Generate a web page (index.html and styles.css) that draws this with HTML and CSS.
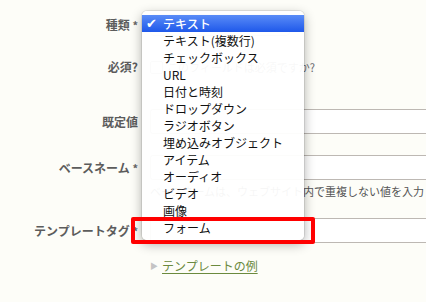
FILE: index.html
```html
<!DOCTYPE html>
<html lang="ja">
<head>
<meta charset="utf-8">
<link rel="stylesheet" href="styles.css">
</head>
<body>
<div class="page">
  <form class="form">
    <div class="row row-type">
      <div class="label">種類 <span class="req">*</span></div>
      <div class="field"><div class="select"></div></div>
    </div>
    <div class="row row-required">
      <div class="label">必須?</div>
      <div class="field check-line"><span class="checkbox"></span><span class="note">このフィールドは必須ですか?</span></div>
    </div>
    <div class="row row-default">
      <div class="label">既定値</div>
      <div class="field"><div class="input"></div></div>
    </div>
    <div class="row row-basename">
      <div class="label">ベースネーム <span class="req">*</span></div>
      <div class="field">
        <div class="input"></div>
        <div class="hint">ベースネームは、ウェブサイト内で重複しない値を入力</div>
      </div>
    </div>
    <div class="row row-tag">
      <div class="label">テンプレートタグ <span class="req">*</span></div>
      <div class="field"><div class="input"></div></div>
    </div>
    <div class="row row-link">
      <div class="label"></div>
      <div class="field"><span class="tri">▶</span><a class="link" href="#">テンプレートの例</a></div>
    </div>
  </form>

  <ul class="menu">
    <li class="item selected"><span class="check">✔</span>テキスト</li>
    <li class="item">テキスト(複数行)</li>
    <li class="item">チェックボックス</li>
    <li class="item">URL</li>
    <li class="item">日付と時刻</li>
    <li class="item">ドロップダウン</li>
    <li class="item">ラジオボタン</li>
    <li class="item">埋め込みオブジェクト</li>
    <li class="item">アイテム</li>
    <li class="item">オーディオ</li>
    <li class="item">ビデオ</li>
    <li class="item">画像</li>
    <li class="item">フォーム</li>
  </ul>

  <div class="highlight-box"></div>
</div>
</body>
</html>
```

FILE: styles.css
```css
html, body {
  margin: 0;
  padding: 0;
  background: #fdfdf8;
}
body {
  width: 426px;
  height: 302px;
  overflow: hidden;
  font-family: "Noto Sans CJK JP", "Noto Sans", sans-serif;
}
.page {
  position: relative;
  width: 426px;
  height: 302px;
  overflow: hidden;
}
.form {
  display: flex;
  flex-direction: column;
  padding-top: 14px;
}
.row {
  display: grid;
  grid-template-columns: 138px 1fr;
  column-gap: 12px;
  align-items: start;
}
.field {
  min-width: 0;
  overflow: hidden;
}
.label {
  text-align: right;
  font-size: 12px;
  font-weight: bold;
  color: #5c5c5c;
  white-space: nowrap;
}
.req {
  font-weight: bold;
  color: #666;
  font-size: 11px;
}
.row-type .label { line-height: 22px; }
.select {
  height: 22px;
  width: 140px;
  border: 1px solid #bbb;
  border-radius: 4px;
  background: #fff;
  box-sizing: border-box;
}
.row-required { margin-top: 23px; }
.row-required .label { line-height: 16px; }
.check-line {
  display: flex;
  align-items: center;
  gap: 4px;
  height: 16px;
}
.checkbox {
  width: 11px;
  height: 11px;
  flex: none;
  border: 1px solid #aaa;
  border-radius: 2px;
  background: #fff;
}
.note {
  font-size: 11px;
  color: #6a6a70;
  white-space: nowrap;
}
.row-default { margin-top: 34px; }
.row-default .label,
.row-basename .label,
.row-tag .label { line-height: 25px; }
.input {
  height: 25px;
  box-sizing: border-box;
  border: 1px solid #bdb8b3;
  border-right: none;
  border-radius: 3px 0 0 3px;
  background: #fff;
}
.row-basename { margin-top: 21px; }
.hint {
  margin-top: 4px;
  font-size: 11px;
  line-height: 14px;
  color: #555;
  white-space: nowrap;
}
.row-tag { margin-top: 20px; }
.row-link { margin-top: 14px; }
.row-link .field {
  line-height: 16px;
  font-size: 12px;
  display: flex;
  align-items: center;
}
.tri {
  font-size: 8px;
  color: #c4c4c4;
  width: 12px;
}
.link {
  color: #6b8a3e;
  text-decoration: underline;
  text-underline-offset: 2px;
}

.menu {
  position: absolute;
  left: 142px;
  top: 11px;
  width: 162px;
  margin: 0;
  padding: 4px 0;
  list-style: none;
  background: rgba(255, 255, 255, 0.95);
  border-radius: 5px;
  box-shadow: 0 0 0 1px rgba(0, 0, 0, 0.08), 0 4px 12px rgba(0, 0, 0, 0.33);
  box-sizing: border-box;
}
.item {
  position: relative;
  height: 17px;
  line-height: 17px;
  padding-left: 21px;
  font-size: 12px;
  color: #111;
  white-space: nowrap;
}
.item.selected {
  background: linear-gradient(#5a8cf7, #1e58ea);
  color: #fff;
  font-weight: 500;
}
.check {
  position: absolute;
  left: 4px;
  top: 0;
  font-size: 13px;
  font-family: "DejaVu Sans", sans-serif;
}
.highlight-box {
  position: absolute;
  left: 131px;
  top: 217px;
  width: 184px;
  height: 27px;
  border: 4px solid #ff0000;
  border-radius: 2px;
  box-sizing: border-box;
}
```
